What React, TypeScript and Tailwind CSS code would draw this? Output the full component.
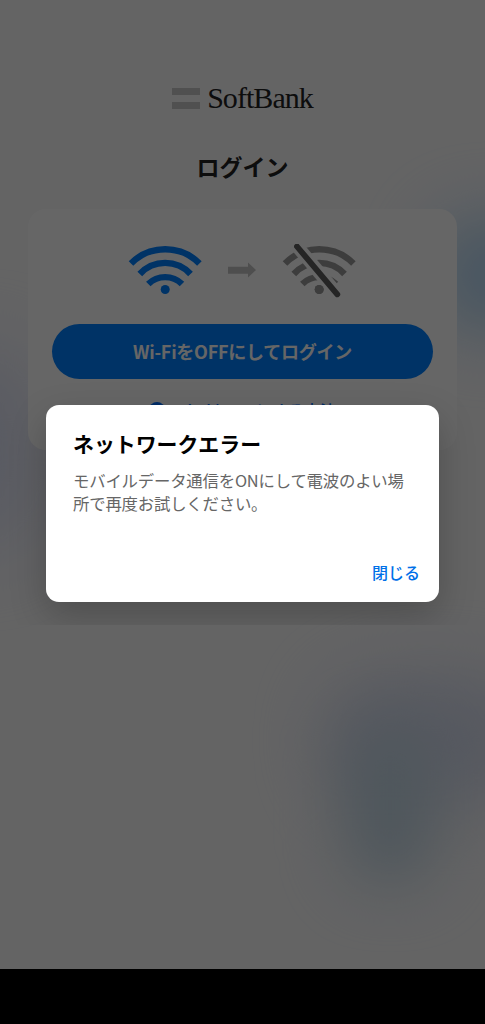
import React from "react";

function WifiArcs() {
    return (
        <g fill="none" stroke="currentColor" strokeWidth="6.4">
            <path d="M3 19.5A48 48 0 0 1 71.4 19.5" />
            <path d="M11.8 30A34.5 34.5 0 0 1 62.5 30" />
            <path d="M20.3 40A24 24 0 0 1 54 40" />
            <circle cx="37.2" cy="45.5" r="4.5" fill="currentColor" stroke="none" />
        </g>
    );
}

function WifiOn() {
    return (
        <svg width="74" height="56" viewBox="0 0 74 56" className="text-[#007fff]">
            <WifiArcs />
        </svg>
    );
}

function WifiOff() {
    return (
        <svg width="74" height="56" viewBox="0 0 74 56" className="text-[#9a9a9a]">
            <mask id="slash">
                <rect width="74" height="56" fill="white" />
                <path d="M11 -2.5L59.7 55.3" stroke="black" strokeWidth="13" />
            </mask>
            <g mask="url(#slash)">
                <WifiArcs />
            </g>
            <circle cx="37.2" cy="45.5" r="4.5" fill="currentColor" />
            <path d="M15 2.5L55.3 50.3" stroke="#5c5c5c" strokeWidth="5.8" strokeLinecap="round" />
        </svg>
    );
}

function Blobs() {
    return (
        <div className="pointer-events-none absolute inset-0">
            <div className="absolute top-[215px] left-[430px] h-[120px] w-[130px] rounded-full bg-[#b4d6f2] blur-[32px]" />
            <div className="absolute top-[350px] left-[-90px] h-[200px] w-[130px] rounded-full bg-[#dde1f5] blur-[36px]" />
            <div className="absolute top-[675px] left-[325px] h-[130px] w-[210px] rounded-full bg-[#d8def0] blur-[32px]" />
            <div className="absolute top-[725px] left-[345px] h-[160px] w-[90px] rounded-full bg-[#c4d8e6] blur-[30px]" />
        </div>
    );
}

export default function App() {
    return (
        <div className="relative h-[1024px] w-[485px] overflow-hidden bg-black font-['Noto_Sans_CJK_JP',sans-serif]">
            <main className="relative h-[968.5px] overflow-hidden bg-[#f9f9fb]">
                <Blobs />
                <div className="relative flex flex-col items-center">
                    <div className="mt-[82px] flex h-8 items-center gap-2">
                        <div className="flex w-7 flex-col gap-[7px]">
                            <span className="h-[7px] bg-[#c8c8c8]" />
                            <span className="h-[7px] bg-[#c8c8c8]" />
                        </div>
                        <span className="-ml-px font-['Liberation_Serif',serif] text-[30px] leading-8 tracking-[-0.95px] text-[#222]">SoftBank</span>
                    </div>

                    <h1 className="mt-9 text-[23px] leading-8 font-bold text-[#222]">ログイン</h1>

                    <section className="mt-[27px] flex h-[241px] w-[429px] flex-col items-center rounded-[18px] bg-white pt-[35px]">
                        <div className="mr-px flex h-14 items-center">
                            <WifiOn />
                            <svg width="28" height="16" viewBox="0 0 28 16" className="mx-[26px] -mt-1 text-[#c4c4c4]">
                                <path d="M0 4.8H20V0.5L28 8L20 15.5V11.8H0Z" fill="currentColor" />
                            </svg>
                            <WifiOff />
                        </div>
                        <button className="mt-6 h-[55px] w-[381px] rounded-full bg-[#007fff] text-[18px] font-bold tracking-[-0.25px] text-white">
                            Wi-FiをOFFにしてログイン
                        </button>
                        <a href="#" className="mt-[21px] flex items-center gap-2 text-[16px] leading-5 font-medium tracking-[-0.15px] text-[#006fff]">
                            <span className="flex size-4 items-center justify-center rounded-full bg-[#006fff] text-xs text-white">?</span>
                            Wi-FiをOFFにする方法
                        </a>
                    </section>
                </div>
            </main>

            {/* dimmed backdrop */}
            <div className="absolute inset-0 bg-black/60" />

            <div className="absolute inset-x-0 top-[365px] h-[260px] overflow-hidden px-[46px] pt-[40.4px]">
                <div role="dialog" className="flex h-[196.5px] w-[393px] flex-col rounded-[13px] bg-white pt-[22px] pr-[19px] pb-[18px] pl-[27px] shadow-[0_14px_36px_rgba(0,0,0,0.22)]">
                    <h2 className="text-[20.9px] leading-8 font-bold text-black">ネットワークエラー</h2>
                    <p className="mt-[10px] text-[16.4px] leading-[23px] tracking-[-0.2px] whitespace-nowrap text-[#666]">
                        モバイルデータ通信をONにして電波のよい場
                        <br />
                        所で再度お試しください。
                    </p>
                    <button className="mt-auto self-end text-[16px] leading-6 font-medium text-[#0070e8]">閉じる</button>
                </div>
            </div>
        </div>
    );
}
